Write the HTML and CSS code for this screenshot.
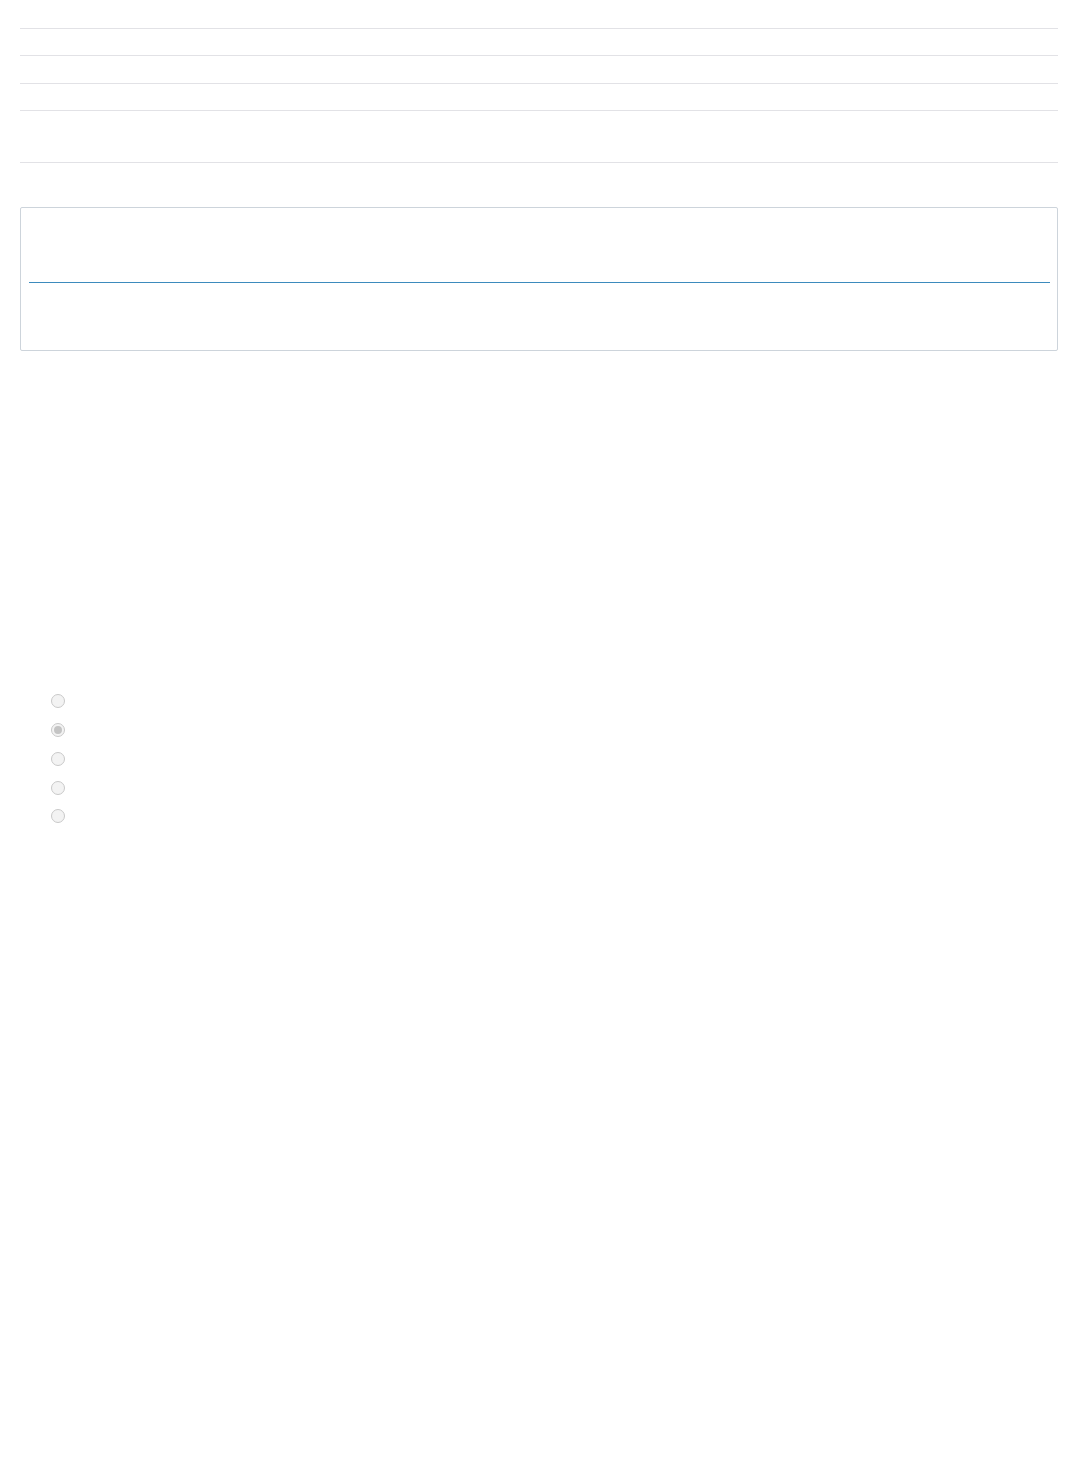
FILE: index.html
```html
<!DOCTYPE html>
<html lang="en">
<head>
<meta charset="utf-8">
<title>Form</title>
<link rel="stylesheet" href="styles.css">
</head>
<body>
<div class="page">
  <div class="rows">
    <div class="row r1"></div>
    <div class="row r2"></div>
    <div class="row r3"></div>
    <div class="row r4"></div>
  </div>
  <div class="panel">
    <div class="panel-rule"></div>
  </div>
  <ul class="radios">
    <li class="radio-row"><span class="radio"></span></li>
    <li class="radio-row"><span class="radio checked"></span></li>
    <li class="radio-row"><span class="radio"></span></li>
    <li class="radio-row short"><span class="radio"></span></li>
    <li class="radio-row"><span class="radio"></span></li>
  </ul>
</div>
</body>
</html>
```
FILE: styles.css
```css
html, body {
  margin: 0;
  padding: 0;
  background: #ffffff;
  font-family: "Open Sans", "Liberation Sans", sans-serif;
}
.page {
  padding: 0 20px;
  min-height: 1481px;
  box-sizing: border-box;
}
.rows {
  margin-top: 28px;
  border-top: 1px solid #e2e2e6;
}
.row {
  border-bottom: 1px solid #e2e2e6;
}
.r1 { height: 26px; }
.r2 { height: 27px; }
.r3 { height: 26px; }
.r4 { height: 51px; }
.panel {
  margin-top: 44px;
  border: 1px solid #cdd4db;
  border-radius: 2px;
  padding: 74px 7px 0 8px;
  box-sizing: border-box;
  height: 144px;
}
.panel-rule {
  height: 1px;
  background: #3d8bbd;
}
.radios {
  list-style: none;
  margin: 343px 0 0 31px;
  padding: 0;
}
.radio-row {
  height: 29px;
}
.radio-row.short {
  height: 28px;
}
.radio {
  display: block;
  width: 14px;
  height: 14px;
  box-sizing: border-box;
  border: 1px solid #c9c9c9;
  border-radius: 50%;
  background: #f3f3f3;
  position: relative;
}
.radio.checked::after {
  content: "";
  position: absolute;
  left: 2px;
  top: 2px;
  width: 8px;
  height: 8px;
  border-radius: 50%;
  background: #c4c4c4;
}
```
